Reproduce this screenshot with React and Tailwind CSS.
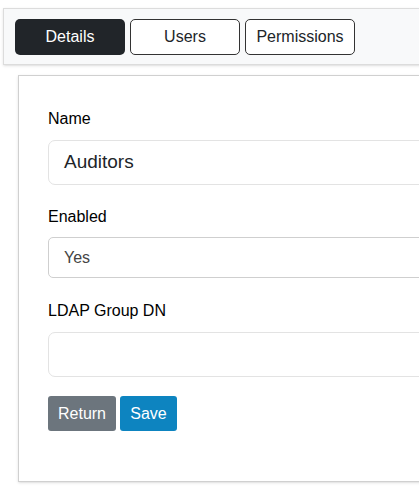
export default function App() {
  return (
    <div className="w-[419px] h-[497px] overflow-hidden bg-white" style={{fontFamily: '"Liberation Sans", Arial, sans-serif'}}>
      <div className="w-[460px]">
        <div className="mt-[8px] ml-[3px] h-[57px] bg-[#f8f9fa] border border-[#dcdcdc] shadow-sm flex items-center gap-[5px] pl-[11px]">
          <button className="w-[110px] h-[36px] rounded-[5px] bg-[#212529] text-white text-[16px]">Details</button>
          <button className="w-[110px] h-[36px] rounded-[5px] bg-white border border-[#333] text-[#212529] text-[16px]">Users</button>
          <button className="w-[110px] h-[36px] rounded-[5px] bg-white border border-[#333] text-[#212529] text-[16px]">Permissions</button>
        </div>
        <div className="mt-[10px] ml-[18px] h-[407px] border border-[#d0d0d0] bg-white shadow-sm pl-[29px] pt-[31px]">
          <div className="text-[16px] text-black h-[22px]">Name</div>
          <div className="mt-[11px] h-[45px] border border-[#e3e3e3] rounded-[7px] flex items-center pl-[15px] text-[19px] text-[#212529]">Auditors</div>
          <div className="mt-[20px] text-[16px] text-black h-[22px]">Enabled</div>
          <div className="mt-[10px] h-[41px] border border-[#cfcfcf] rounded-[5px] flex items-center pl-[15px] text-[16px] text-[#444]">Yes</div>
          <div className="mt-[21px] text-[16px] text-black h-[22px]">LDAP Group DN</div>
          <div className="mt-[11px] h-[45px] border border-[#e3e3e3] rounded-[7px]"></div>
          <div className="mt-[19px] flex gap-[4px]">
            <button className="w-[68px] h-[35px] rounded-[3px] bg-[#6c757d] text-white text-[16px]">Return</button>
            <button className="w-[57px] h-[35px] rounded-[3px] bg-[#0d84c0] text-white text-[16px]">Save</button>
          </div>
        </div>
      </div>
    </div>
  );
}
